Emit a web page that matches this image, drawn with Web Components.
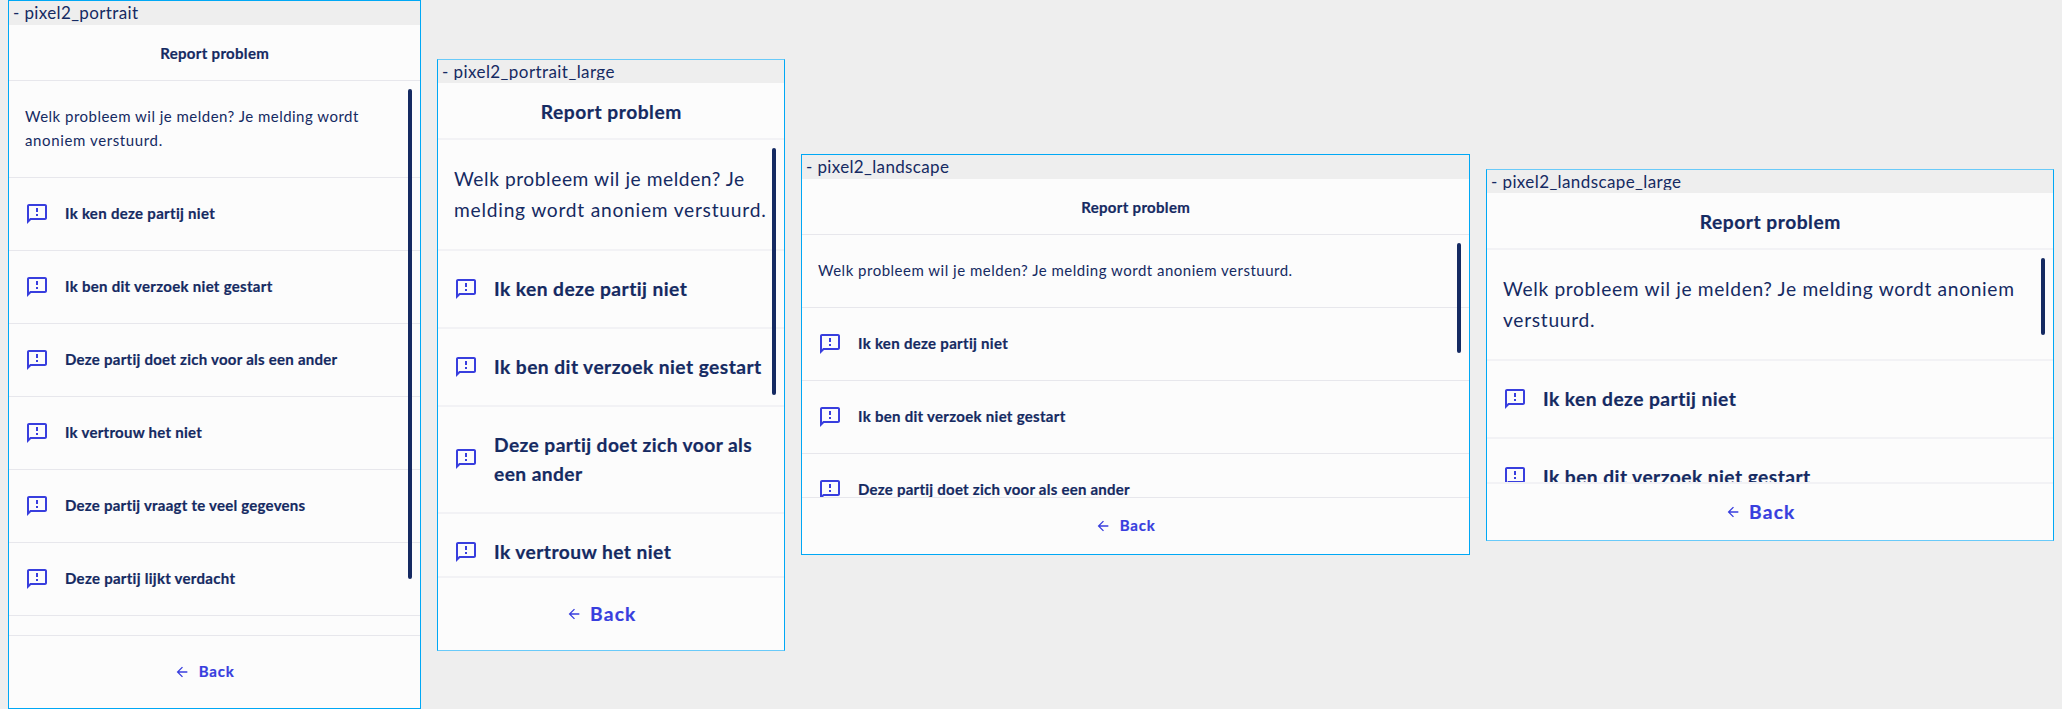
<!DOCTYPE html>
<html lang="nl">
<head>
<meta charset="utf-8">
<title>Report problem – golden variants</title>
<style>
  html, body { margin: 0; height: 100%; }
  body { background: #eee; overflow: hidden; font-family: Lato, "Noto Sans", sans-serif; color: #152a62; }
</style>
</head>
<body>
<golden-board>
  <device-frame name="- pixel2_portrait" name-width="124" style="width:413px;height:709px;--footer:73px">
    <intro-text slot="content" lines="Welk probleem wil je melden? Je melding wordt:335|anoniem verstuurd.:137"></intro-text>
    <report-item slot="content" lines="Ik ken deze partij niet:149.5"></report-item>
    <report-item slot="content" lines="Ik ben dit verzoek niet gestart:207"></report-item>
    <report-item slot="content" lines="Deze partij doet zich voor als een ander:272.5"></report-item>
    <report-item slot="content" lines="Ik vertrouw het niet:137"></report-item>
    <report-item slot="content" lines="Deze partij vraagt te veel gegevens:240.5"></report-item>
    <report-item slot="content" lines="Deze partij lijkt verdacht:170"></report-item>
    <scroll-thumb slot="thumb" style="height:490px"></scroll-thumb>
  </device-frame>
  <device-frame class="large" name="- pixel2_portrait_large" name-width="171.5" style="width:348px;height:592px;margin-top:59px;--footer:74px">
    <intro-text slot="content" lines="Welk probleem wil je melden? Je:291|melding wordt anoniem verstuurd.:311"></intro-text>
    <report-item slot="content" lines="Ik ken deze partij niet:193"></report-item>
    <report-item slot="content" lines="Ik ben dit verzoek niet gestart:267.5"></report-item>
    <report-item slot="content" lines="Deze partij doet zich voor als:257.5|een ander:89"></report-item>
    <report-item slot="content" lines="Ik vertrouw het niet:177.5"></report-item>
    <scroll-thumb slot="thumb" style="height:247px"></scroll-thumb>
  </device-frame>
  <device-frame name="- pixel2_landscape" name-width="142" style="width:669px;height:401px;margin-top:154px;--footer:57px">
    <intro-text slot="content" lines="Welk probleem wil je melden? Je melding wordt anoniem verstuurd.:475"></intro-text>
    <report-item slot="content" lines="Ik ken deze partij niet:149.5"></report-item>
    <report-item slot="content" lines="Ik ben dit verzoek niet gestart:207"></report-item>
    <report-item slot="content" lines="Deze partij doet zich voor als een ander:272"></report-item>
    <scroll-thumb slot="thumb" style="height:110px"></scroll-thumb>
  </device-frame>
  <device-frame class="large" name="- pixel2_landscape_large" name-width="189" style="width:568px;height:372px;margin-top:169px;--footer:58px">
    <intro-text slot="content" lines="Welk probleem wil je melden? Je melding wordt anoniem:511.5|verstuurd.:91"></intro-text>
    <report-item slot="content" lines="Ik ken deze partij niet:193"></report-item>
    <report-item slot="content" lines="Ik ben dit verzoek niet gestart:267.5"></report-item>
    <scroll-thumb slot="thumb" style="height:77px"></scroll-thumb>
  </device-frame>
</golden-board>

<script>
const shadow = (host, html) => { host.attachShadow({ mode: "open" }).innerHTML = html; };
const linesOf = host => host.getAttribute("lines").split("|").map(l => {
  const i = l.lastIndexOf(":");
  return `<fit-text w="${l.slice(i + 1)}">${l.slice(0, i)}</fit-text>`;
}).join("");

// A single line of text, tracked so its ink spans the requested width.
class FitText extends HTMLElement {
  connectedCallback() {
    if (this.shadowRoot) return;
    shadow(this, `<style>:host{display:block;white-space:nowrap;width:max-content}span{display:block}</style><span><slot></slot></span>`);
    const cs = getComputedStyle(this);
    const ctx = document.createElement("canvas").getContext("2d");
    ctx.font = `${cs.fontWeight} ${cs.fontSize} ${cs.fontFamily}`;
    const text = this.textContent, m = ctx.measureText(text);
    const ink = m.actualBoundingBoxLeft + m.actualBoundingBoxRight;
    const ls = (Number(this.getAttribute("w")) - ink) / (text.length - 1);
    const span = this.shadowRoot.querySelector("span");
    span.style.letterSpacing = ls.toFixed(3) + "px";
    span.style.marginRight = (-ls).toFixed(3) + "px";
  }
}

class GoldenBoard extends HTMLElement {
  connectedCallback() {
    shadow(this, `<style>:host{display:flex;align-items:flex-start;gap:16px;padding-left:8px;height:709px;width:2054px;box-sizing:border-box}
      ::slotted(*){flex:none}</style><slot></slot>`);
  }
}

class DeviceFrame extends HTMLElement {
  connectedCallback() {
    const large = this.classList.contains("large");
    shadow(this, `<style>
      :host{display:grid;grid-template-rows:24px 55px minmax(0,1fr) var(--footer);box-sizing:border-box;border:1px solid #00a8f5;
        background:#fcfcfc;--rule:1px solid #e7e7ec;--size:15px;--intro-line:24px;--item-line:24px;--item-pad:24px;--lift:1px}
      :host(.large){grid-template-rows:23px 55px minmax(0,1fr) var(--footer);border-top-color:#69caf9;border-bottom-color:#69caf9;--rule:2px solid #f2f2f5;
        --size:19.2px;--intro-line:30.5px;--item-line:29px;--item-pad:23.5px;--lift:0px}
      .name{background:#eee;overflow:hidden}
      .name div{height:22px;overflow:hidden;padding-left:4px;font-size:17px;line-height:24px}
      :host(.large) .name div{height:20px}
      header{display:grid;place-items:center;font-weight:700;font-size:var(--size);padding-top:1px;box-sizing:border-box}
      main{border-top:var(--rule);position:relative;overflow:hidden;font-size:var(--size)}
      .thumb{position:absolute;right:8px;top:8px}
      :host(.large) .thumb{top:7.5px}
      header,footer{-webkit-text-stroke:.2px currentColor}
      footer{border-top:var(--rule);box-sizing:border-box;display:flex;align-items:center;justify-content:center;gap:8.5px;
        color:#383ede;font-weight:700;font-size:var(--size);padding-right:21px}
      footer fit-text{margin-bottom:2px}
      svg{width:16px;height:16px;display:block;fill:currentColor}
    </style>
    <div class="name"><div><fit-text w="${this.getAttribute("name-width")}">${this.getAttribute("name")}</fit-text></div></div>
    <header><fit-text w="${large ? 138.5 : 107}">Report problem</fit-text></header>
    <main><slot name="content"></slot><div class="thumb"><slot name="thumb"></slot></div></main>
    <footer><svg viewBox="0 0 24 24"><path d="M20 11H7.83l5.59-5.59L12 4l-8 8 8 8 1.41-1.41L7.83 13H20v-2z"/></svg>
      <fit-text w="${large ? 45 : 35}">Back</fit-text></footer>`);
  }
}

class IntroText extends HTMLElement {
  connectedCallback() {
    shadow(this, `<style>:host{display:block;padding:calc(24px - var(--lift)) 16px calc(24px + var(--lift));line-height:var(--intro-line);border-bottom:var(--rule)}</style>${linesOf(this)}`);
  }
}

class ReportItem extends HTMLElement {
  connectedCallback() {
    shadow(this, `<style>
      :host{display:flex;align-items:center;gap:16px;padding:var(--item-pad) 16px;line-height:var(--item-line);border-bottom:var(--rule);font-weight:700}
      svg{width:24px;height:24px;flex:none;fill:#383ede;margin:-.4px 0 .4px}
      div{margin:-1px 0 1px;-webkit-text-stroke:.2px currentColor}
    </style>
    <svg viewBox="0 0 24 24"><path d="M20 2H4c-1.1 0-1.99.9-1.99 2L2 22l4-4h14c1.1 0 2-.9 2-2V4c0-1.1-.9-2-2-2zm0 14H5.17l-.59.59-.58.58V4h16v12zm-9-4h2v2h-2zm0-6h2v4h-2z"/></svg>
    <div>${linesOf(this)}</div>`);
  }
}

class ScrollThumb extends HTMLElement {
  connectedCallback() {
    shadow(this, `<style>:host{display:block;width:4px;border-radius:2px;background:#152a62}</style>`);
  }
}

customElements.define("golden-board", GoldenBoard);
customElements.define("device-frame", DeviceFrame);
customElements.define("intro-text", IntroText);
customElements.define("report-item", ReportItem);
customElements.define("scroll-thumb", ScrollThumb);
customElements.define("fit-text", FitText);
</script>
</body>
</html>
